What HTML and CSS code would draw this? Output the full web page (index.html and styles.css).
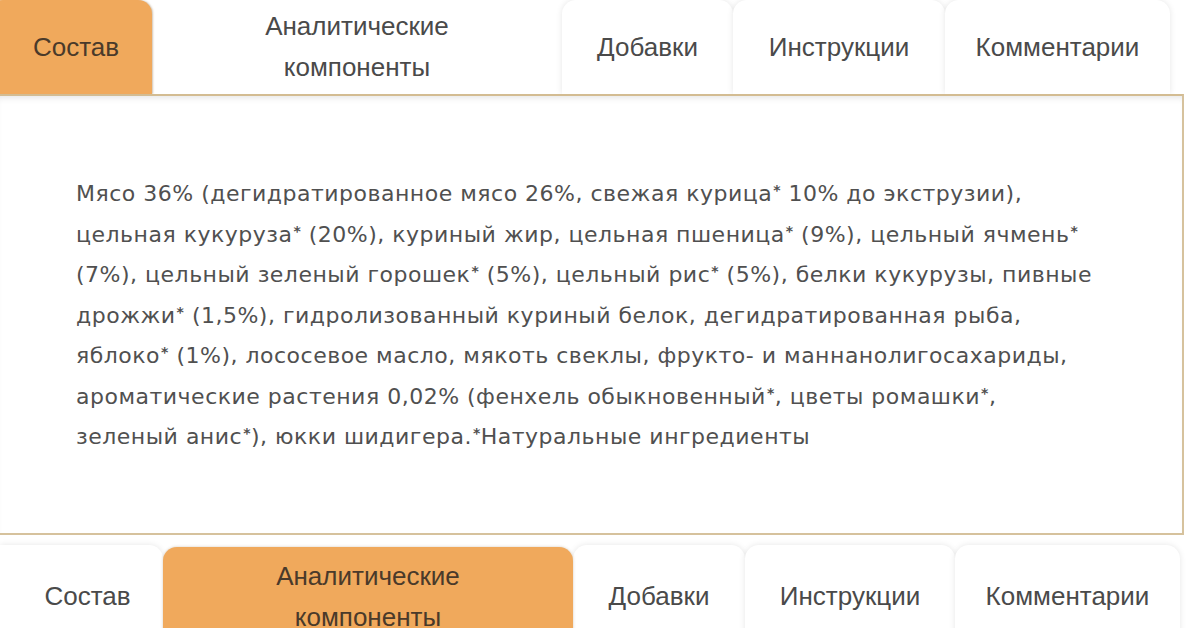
FILE: index.html
```html
<!DOCTYPE html>
<html lang="ru">
<head>
<meta charset="utf-8">
<title>Состав</title>
<link rel="stylesheet" href="styles.css">
</head>
<body>
<div class="page">
  <div class="tabs tabs-top">
    <div class="tab tab-first active">Состав</div>
    <div class="tab tab-wide flat">Аналитические<br>компоненты</div>
    <div class="tab tab-add">Добавки</div>
    <div class="tab tab-instr">Инструкции</div>
    <div class="tab tab-comm">Комментарии</div>
  </div>
  <div class="panel">
    <p class="composition">Мясо 36% (дегидратированное мясо 26%, свежая курица<sup>*</sup> 10% до экструзии),<br>цельная кукуруза<sup>*</sup> (20%), куриный жир, цельная пшеница<sup>*</sup> (9%), цельный ячмень<sup>*</sup><br>(7%), цельный зеленый горошек<sup>*</sup> (5%), цельный рис<sup>*</sup> (5%), белки кукурузы, пивные<br>дрожжи<sup>*</sup> (1,5%), гидролизованный куриный белок, дегидратированная рыба,<br>яблоко<sup>*</sup> (1%), лососевое масло, мякоть свеклы, фрукто- и маннанолигосахариды,<br>ароматические растения 0,02% (фенхель обыкновенный<sup>*</sup>, цветы ромашки<sup>*</sup>,<br>зеленый анис<sup>*</sup>), юкки шидигера.<sup>*</sup>Натуральные ингредиенты</p>
  </div>
  <div class="tabs tabs-bottom">
    <div class="tab tab-first b-first">Состав</div>
    <div class="tab tab-wide active">Аналитические<br>компоненты</div>
    <div class="tab tab-add">Добавки</div>
    <div class="tab tab-instr">Инструкции</div>
    <div class="tab tab-comm">Комментарии</div>
  </div>
</div>
</body>
</html>
```

FILE: styles.css
```css
html, body {
  margin: 0;
  padding: 0;
  background: #ffffff;
}

.page {
  width: 1200px;
  height: 628px;
  overflow: hidden;
}

.tabs {
  display: flex;
  align-items: flex-end;
}

.tabs-top {
  height: 94px;
  margin-left: -11px;
}

.tabs-bottom {
  margin-top: 10px;
  height: 120px;
  align-items: flex-start;
}

.tab {
  box-sizing: border-box;
  height: 94px;
  display: flex;
  align-items: center;
  justify-content: center;
  text-align: center;
  font-family: "Liberation Sans", Arial, sans-serif;
  font-size: 26px;
  line-height: 41px;
  color: #4a4a4a;
  background: #ffffff;
  border-radius: 14px 14px 0 0;
  box-shadow: 0 0 6px rgba(0, 0, 0, 0.10);
  position: relative;
}

.tabs-bottom .tab {
  height: 110px;
  padding-bottom: 8px;
}

.tab-first { width: 163px; }
.tab-wide { width: 410px; }
.tab-add { width: 171px; }
.tab-instr { width: 212px; }
.tab-comm { width: 225px; }

.tabs-bottom .tab-add { width: 172px; }
.tabs-bottom .tab-instr { width: 210px; }

.tab.flat {
  box-shadow: none;
  border-radius: 0;
}

.tab.active {
  background: #f0a95c;
  color: #4a3a2a;
  box-shadow: 1px 0 2px rgba(120, 80, 30, 0.35);
  z-index: 1;
}

.tabs-bottom .tab.active {
  margin-top: 2px;
  height: 108px;
  box-shadow: 0 0 3px rgba(120, 80, 30, 0.30);
}

.tabs-top .tab.active {
  padding-left: 11px;
}

.tabs-bottom .b-first {
  border-radius: 0 14px 0 0;
  width: 163px;
  padding-left: 12px;
}

.panel {
  box-sizing: border-box;
  width: 1184px;
  height: 441px;
  border-top: 2px solid #d3bc92;
  border-right: 2px solid #d6c29d;
  border-bottom: 2px solid #d6c29d;
  box-shadow: inset 0 6px 6px -4px rgba(0, 0, 0, 0.10);
  padding: 78px 0 0 76px;
  position: relative;
  z-index: 2;
  background: #ffffff;
}

.composition {
  margin: 0;
  font-family: "DejaVu Sans", "Open Sans", sans-serif;
  font-size: 22px;
  line-height: 40.5px;
  color: #505050;
  letter-spacing: 0.5px;
  white-space: nowrap;
}

.composition sup {
  font-size: 14px;
  font-weight: bold;
  line-height: 0;
  vertical-align: 6px;
  margin-left: 1px;
}
```
